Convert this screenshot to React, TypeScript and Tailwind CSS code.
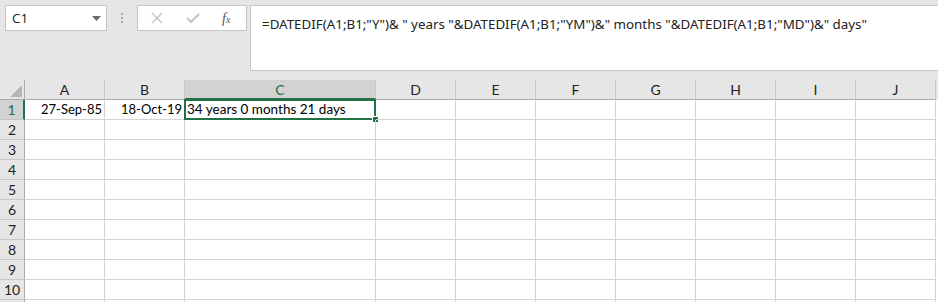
import React from "react";

const cols = [
  { l: "A", w: 80 },
  { l: "B", w: 80 },
  { l: "C", w: 191 },
  { l: "D", w: 80 },
  { l: "E", w: 80 },
  { l: "F", w: 80 },
  { l: "G", w: 80 },
  { l: "H", w: 80 },
  { l: "I", w: 80 },
  { l: "J", w: 80 },
];

const rows = [1, 2, 3, 4, 5, 6, 7, 8, 9, 10, 11];

const font = { fontFamily: "'Open Sans', 'Liberation Sans', sans-serif" };
const cellFont = { fontFamily: "Lato, 'Liberation Sans', sans-serif" };

export default function App() {
  return (
    <div className="w-[938px] h-[302px] overflow-hidden bg-[#e6e6e6] text-black" style={font}>
      {/* formula bar */}
      <div className="flex h-[80px] pt-[5px] pl-[5px]">
        <div className="w-[102px] h-[26px] bg-white border border-[#c6c6c6] flex items-center justify-between pl-[6px] pr-[5px]">
          <span className="text-[13.5px] text-[#222]">C1</span>
          <svg width="9" height="5" viewBox="0 0 9 5">
            <path d="M0 0 L9 0 L4.5 5 Z" fill="#6b6b6b" />
          </svg>
        </div>
        <div className="w-[30px] h-[26px] flex flex-col items-center justify-center gap-[2px]">
          <div className="w-[2px] h-[2px] bg-[#a6a6a6]" />
          <div className="w-[2px] h-[2px] bg-[#a6a6a6]" />
          <div className="w-[2px] h-[2px] bg-[#a6a6a6]" />
        </div>
        <div className="w-[110px] h-[26px] bg-white border border-[#c6c6c6] flex items-center">
          <svg className="ml-[13px]" width="12" height="12" viewBox="0 0 12 12">
            <path d="M1 1 L11 11 M11 1 L1 11" stroke="#c3c3c3" strokeWidth="1.4" />
          </svg>
          <svg className="ml-[23px]" width="14" height="12" viewBox="0 0 14 12">
            <path d="M1 6 L5 10 L13 2" stroke="#c3c3c3" strokeWidth="2" fill="none" />
          </svg>
          <span
            className="ml-[22px] text-[14px] italic text-[#555]"
            style={{ fontFamily: "'Liberation Serif', serif" }}
          >
            f<span className="text-[10px]">x</span>
          </span>
        </div>
        <div className="ml-[3px] flex-1 h-[66px] bg-white border-t border-l border-b border-[#c6c6c6] pl-[11px] pt-[5px]">
          <span className="text-[13.35px] text-[#222] whitespace-pre" style={{ fontFamily: "'Noto Sans', 'Open Sans', sans-serif" }}>
            =DATEDIF(A1;B1;"Y")&amp; " years "&amp;DATEDIF(A1;B1;"YM")&amp;" months "&amp;DATEDIF(A1;B1;"MD")&amp;" days"
          </span>
        </div>
      </div>

      {/* grid */}
      <div className="flex flex-col" style={cellFont}>
        {/* header row */}
        <div className="flex h-[20px]">
          <div className="w-[25px] h-[20px] relative border-r border-b border-[#ababab] bg-[#e6e6e6]">
            <svg className="absolute right-[2px] bottom-[2px]" width="12" height="12" viewBox="0 0 12 12">
              <path d="M12 0 L12 12 L0 12 Z" fill="#b5b5b5" />
            </svg>
          </div>
          {cols.map((c) =>
            c.l === "C" ? (
              <div
                key={c.l}
                style={{ width: c.w }}
                className="h-[20px] bg-[#d2d2d2] border-r border-[#c6c6c6] border-b-2 border-b-[#217346] flex items-center justify-center text-[14px] text-[#217346]"
              >
                {c.l}
              </div>
            ) : (
              <div
                key={c.l}
                style={{ width: c.w }}
                className="h-[20px] bg-[#e6e6e6] border-r border-[#c6c6c6] border-b border-b-[#ababab] flex items-center justify-center text-[14px] text-[#222]"
              >
                {c.l}
              </div>
            )
          )}
        </div>
        {rows.map((r) => (
          <div key={r} className="flex h-[20px] bg-white">
            {r === 1 ? (
              <div className="w-[25px] h-[20px] bg-[#d2d2d2] border-r-2 border-r-[#217346] border-b border-b-[#c6c6c6] flex items-center justify-center text-[14px] text-[#217346]">
                {r}
              </div>
            ) : (
              <div className="w-[25px] h-[20px] bg-[#e6e6e6] border-r border-r-[#ababab] border-b border-b-[#c6c6c6] flex items-center justify-center text-[14px] text-[#222]">
                {r <= 10 ? r : ""}
              </div>
            )}
            {cols.map((c) => {
              const sel = r === 1 && c.l === "C";
              let txt = "";
              let align = "justify-end pr-[2px] text-[13px]";
              if (r === 1 && c.l === "A") txt = "27-Sep-85";
              if (r === 1 && c.l === "B") txt = "18-Oct-19";
              if (sel) {
                txt = "34 years 0 months 21 days";
                align = "justify-start pl-[2px] text-[13.5px]";
              }
              return (
                <div
                  key={c.l}
                  style={{ width: c.w }}
                  className={`h-[20px] border-r border-b border-[#d4d4d4] flex items-center text-black relative ${align}`}
                >
                  {txt}
                  {sel && (
                    <>
                      <div className="absolute -left-[1px] -top-[1px] -right-[1px] -bottom-[1px] border-2 border-[#217346]" />
                      <div className="absolute -right-[4px] -bottom-[4px] w-[7px] h-[7px] bg-[#217346] border border-white" />
                    </>
                  )}
                </div>
              );
            })}
          </div>
        ))}
      </div>
    </div>
  );
}
